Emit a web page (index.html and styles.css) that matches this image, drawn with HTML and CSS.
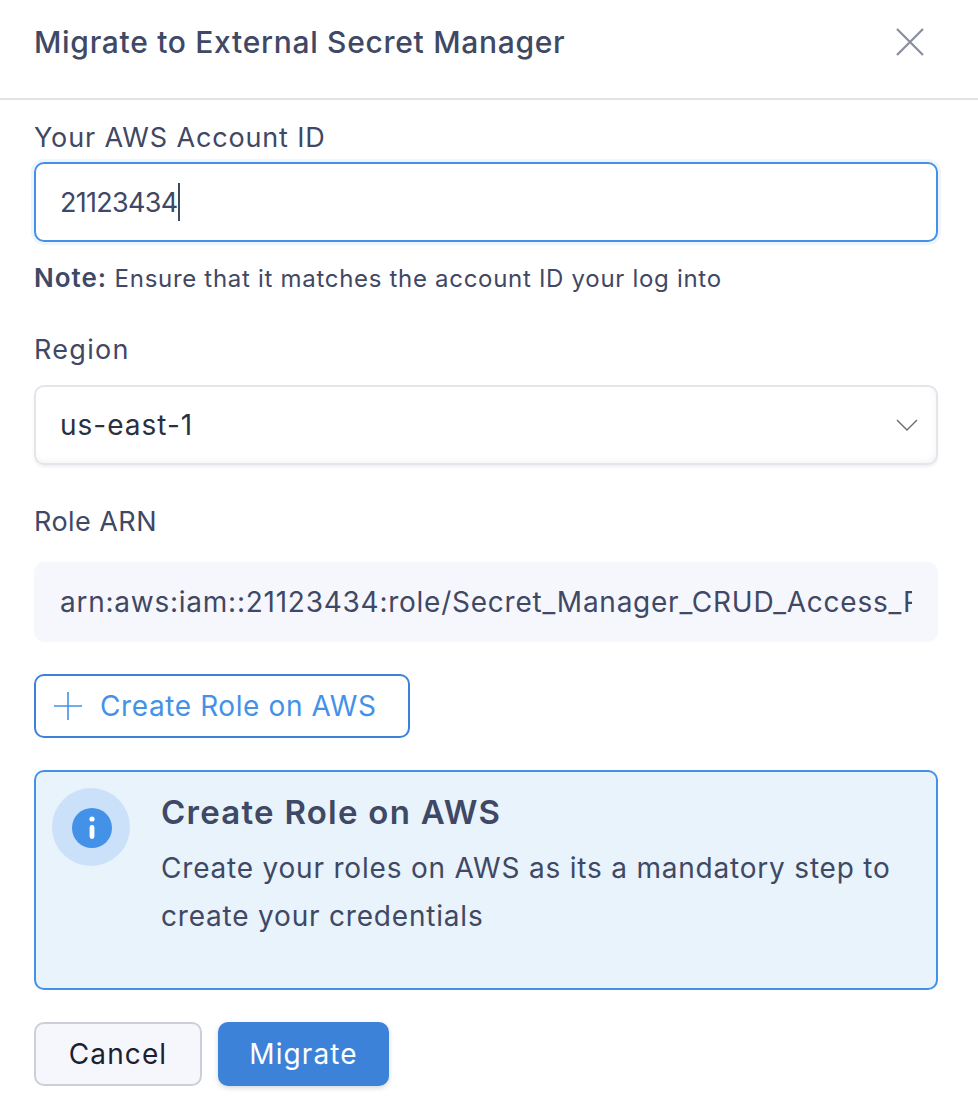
FILE: index.html
```html
<!DOCTYPE html>
<html lang="en">
<head>
<meta charset="utf-8">
<title>Migrate to External Secret Manager</title>
<link rel="stylesheet" href="styles.css">
</head>
<body>
<div class="modal">
  <header class="modal-header">
    <h1 class="modal-title">Migrate to External Secret Manager</h1>
    <svg class="close-icon" width="30" height="30" viewBox="0 0 30 30" aria-hidden="true"><path d="M2 2L28 28M28 2L2 28" stroke="#8a8d9f" stroke-width="2.2" fill="none"/></svg>
  </header>
  <main class="modal-body">
    <label class="field-label first">Your AWS Account ID</label>
    <div class="input focused"><span class="value account">21123434</span><span class="caret"></span></div>
    <p class="note"><strong class="note-strong">Note:</strong> Ensure that it matches the account ID your log into</p>
    <label class="field-label region">Region</label>
    <div class="input select"><span class="value select-value">us-east-1</span>
      <svg class="chevron" width="22" height="12" viewBox="0 0 22 12" aria-hidden="true"><path d="M1 1L11 11L21 1" stroke="#6b6b70" stroke-width="1.4" fill="none"/></svg>
    </div>
    <label class="field-label role">Role ARN</label>
    <div class="input readonly"><span class="value arn">arn:aws:iam::21123434:role/Secret_Manager_CRUD_Access_Role</span></div>
    <button class="btn-outline" type="button">
      <svg class="plus" width="28" height="28" viewBox="0 0 28 28" aria-hidden="true"><path d="M0 14H28M14 0V28" stroke="#4491e8" stroke-width="1.6" fill="none"/></svg>
      <span>Create Role on AWS</span>
    </button>
    <section class="info">
      <div class="info-icon">
        <svg class="info-glyph" width="40" height="40" viewBox="0 0 40 40" aria-hidden="true"><circle cx="20" cy="20" r="20" fill="#4491e8"/><circle cx="20" cy="11" r="2.6" fill="#fff"/><rect x="17.6" y="17" width="4.8" height="14" rx="2.4" fill="#fff"/></svg>
      </div>
      <div class="info-text">
        <h2 class="info-title">Create Role on AWS</h2>
        <p class="info-desc">Create your roles on AWS as its a mandatory step to create your credentials</p>
      </div>
    </section>
    <div class="actions">
      <button class="btn btn-cancel" type="button">Cancel</button>
      <button class="btn btn-primary" type="button">Migrate</button>
    </div>
  </main>
</div>
</body>
</html>
```
FILE: styles.css
```css
* { box-sizing: border-box; }
html, body { margin: 0; padding: 0; background: #fff; }
body { font-family: Inter, "Noto Sans", "Liberation Sans", sans-serif; color: #3f4864; }
.modal { width: 978px; height: 1108px; overflow: hidden; }
.modal-header { height: 100px; border-bottom: 2px solid #e2e2e8; padding: 0 53px 14px 34px; display: flex; align-items: center; justify-content: space-between; }
.modal-title { margin: 0; font-size: 30px; font-weight: 500; line-height: 40px; letter-spacing: 0.7px; }
.close-icon { display: block; }
.modal-body { padding: 0 40px 0 34px; display: flex; flex-direction: column; align-items: flex-start; }
.field-label { display: block; font-size: 27px; line-height: 36px; height: 36px; letter-spacing: 0.85px; }
.field-label.first { margin-top: 20px; margin-bottom: 6px; }
.field-label.region { margin-top: 36px; margin-bottom: 17px; letter-spacing: 1.3px; }
.field-label.role { margin-top: 39px; margin-bottom: 22px; letter-spacing: 0.45px; }
.input { width: 904px; height: 80px; border-radius: 10px; display: flex; align-items: center; padding: 0 26px; overflow: hidden; }
.input.focused { border: 2px solid #4491e8; box-shadow: 0 0 0 3px #f0f5fd; padding-left: 24px; }
.value { font-size: 27px; white-space: nowrap; }
.account { letter-spacing: -0.7px; }
.caret { width: 2px; height: 38px; background: #3f4864; margin-left: 0; }
.note { margin: 18px 0 0; font-size: 24px; line-height: 36px; height: 36px; letter-spacing: 0.7px; }
.note-strong { font-weight: 600; font-size: 26px; letter-spacing: 1px; }
.select { border: 2px solid #e4e4ea; box-shadow: inset 0 -6px 10px -6px #f0f0f3, inset -6px 0 10px -6px #f4f4f6, 0 2px 3px #f0f0f3; justify-content: space-between; padding: 0 18px 0 24px; }
.select-value { color: #2c2f3f; font-size: 28px; letter-spacing: 1px; }
.chevron { display: block; }
.readonly { background: #f6f7fd; }
.arn { display: block; width: 852px; overflow: hidden; font-size: 28px; letter-spacing: 0.75px; }
.btn-outline { margin-top: 32px; width: 376px; height: 64px; background: #fff; border: 2px solid #3d82d9; border-radius: 10px; display: flex; align-items: center; gap: 18px; padding: 0 0 0 18px; color: #4491e8; font: inherit; font-size: 28px; letter-spacing: 0.6px; }
.plus { display: block; flex: none; }
.info { margin-top: 32px; width: 904px; height: 220px; background: #e8f3fc; border: 2px solid #4491e8; border-radius: 10px; display: flex; padding: 16px 16px 0 16px; }
.info-icon { width: 78px; height: 78px; border-radius: 50%; background: #cae1f9; display: flex; align-items: center; justify-content: center; flex: none; }
.info-glyph { display: block; margin: 2px 0 0 2px; }
.info-text { margin-left: 31px; flex: 1; }
.info-title { margin: 2px 0 0; font-size: 33px; line-height: 44px; font-weight: 600; letter-spacing: 1.25px; }
.info-desc { margin: 10px 0 0; font-size: 28px; line-height: 48px; letter-spacing: 0.8px; }
.actions { margin-top: 32px; display: flex; gap: 16px; }
.btn { height: 64px; border-radius: 10px; font: inherit; font-size: 28px; letter-spacing: 1.1px; padding: 0; }
.btn-cancel { width: 168px; background: #f6f7fd; border: 2px solid #cdced9; color: #1c1f33; }
.btn-primary { width: 171px; background: #3d82d9; border: none; color: #fff; box-shadow: 0 2px 5px rgba(60,70,100,.22); }
```
